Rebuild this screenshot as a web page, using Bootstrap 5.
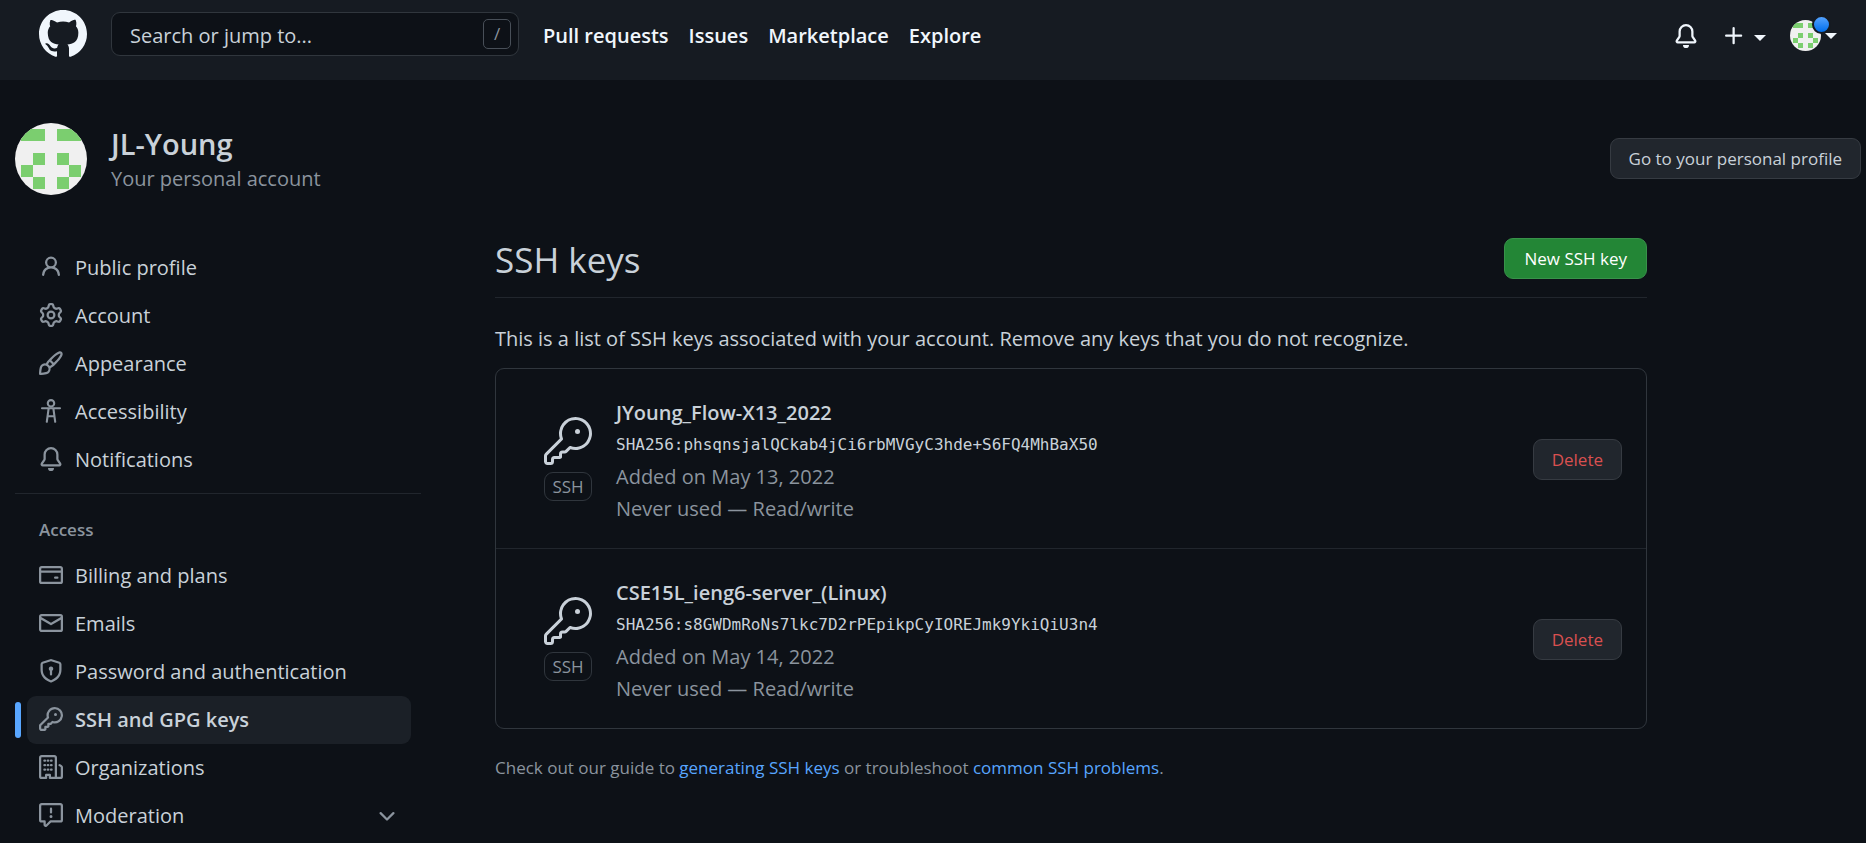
<!DOCTYPE html>
<html lang="en">
<head>
<meta charset="utf-8">
<meta name="viewport" content="width=device-width, initial-scale=1">
<title>SSH and GPG keys</title>
<link rel="stylesheet" href="https://cdn.jsdelivr.net/npm/bootstrap@5.3.0/dist/css/bootstrap.min.css">
<style>
  :root {
    --canvas: #0d1117;
    --header: #161b22;
    --line: #30363d;
    --line-muted: #21262d;
    --fg: #c9d1d9;
    --fg-muted: #8b949e;
    --accent: #58a6ff;
  }
  body {
    background: var(--canvas);
    color: var(--fg);
    font-family: "Segoe UI", "Open Sans", "Noto Sans", sans-serif;
    font-size: 20px;
    line-height: 32px;
  }
  a { color: inherit; text-decoration: none; }
  svg { fill: currentColor; flex-shrink: 0; }
  .text-dim { color: var(--fg-muted); }

  .site-header { background: var(--header); color: #f0f6fc; padding: 10px 29px 22px 39px; }
  .search-box {
    width: 408px; height: 44px; margin-left: 24px;
    background: var(--canvas); border: 1px solid var(--line); border-radius: 9px;
    padding: 0 7px 0 18px;
  }
  .search-box input { color: var(--fg); background: transparent; border: 0; outline: 0; min-width: 0; padding: 3px 0 0; }
  .search-box input::placeholder { color: var(--fg); opacity: 1; }
  .slash-key {
    width: 28px; height: 30px; border: 1px solid #484f58; border-radius: 5px;
    background: transparent; color: var(--fg-muted); font-size: 17px; line-height: 26px; padding: 0;
  }
  .site-links { gap: 20px; margin-left: 24px; padding-top: 3px; font-weight: 600; }
  .site-tools { padding-top: 3px; }
  .icon-btn { background: none; border: 0; padding: 0; color: inherit; display: flex; align-items: center; }
  .caret { border: 6px solid transparent; border-top-color: currentColor; border-bottom: 0; }
  .identicon { border-radius: 50%; background: #f0f0f0; fill: #7bce6f; display: block; }
  .status-dot {
    width: 19px; height: 19px; right: -10px; top: -5px; border: 2px solid var(--header);
    border-radius: 50%; background: linear-gradient(#54a3ff, #006eed);
  }

  .profile { padding: 42px 5px 43px 15px; }
  .profile-name { padding-top: 3px; }
  .profile h2 { font-size: 29px; line-height: 38px; font-weight: 600; }
  .btn-gh {
    --bs-btn-bg: #21262d; --bs-btn-color: var(--fg); --bs-btn-border-color: #363b42;
    --bs-btn-hover-bg: #30363d; --bs-btn-hover-color: var(--fg); --bs-btn-hover-border-color: #8b949e;
    --bs-btn-font-size: 17px; --bs-btn-line-height: 29px; --bs-btn-border-radius: 9px;
    --bs-btn-padding-x: 18px; --bs-btn-padding-y: 5px; white-space: nowrap;
  }
  .btn-new { --bs-btn-bg: #238636; --bs-btn-color: #fff; --bs-btn-border-color: #38924a; --bs-btn-hover-bg: #2ea043; --bs-btn-hover-color: #fff; --bs-btn-padding-x: 19px; }
  .btn-del { --bs-btn-color: #da5050; --bs-btn-hover-bg: #da3633; --bs-btn-hover-color: #fff; }

  .settings { padding: 0 15px; gap: 74px; }
  .side-nav { flex: 0 0 406px; padding-top: 6px; }
  .side-nav ul { padding: 0 10px 0 12px; }
  .side-nav li { position: relative; }
  .side-nav li a { display: flex; align-items: center; gap: 12px; height: 48px; padding: 0 16px 0 12px; border-radius: 9px; }
  .side-nav li svg { color: var(--fg-muted); margin-bottom: 2px; }
  .side-nav .current a { background: #1b2027; font-weight: 600; }
  .side-nav .current::before {
    content: ""; position: absolute; left: -12px; top: 6px; width: 6px; height: 36px;
    border-radius: 6px; background: var(--accent);
  }
  .side-nav hr { margin: 9px 0 20px; border-color: var(--line-muted); opacity: 1; }
  .side-nav h3 { margin: 0 0 7px; padding-left: 24px; font-size: 17px; line-height: 31px; font-weight: 600; color: var(--fg-muted); }

  .keys { max-width: 1152px; min-width: 0; }
  .keys-head { border-bottom: 1px solid var(--line-muted); padding-bottom: 15px; margin-bottom: 25px; }
  .keys-head h1 { font-size: 35px; line-height: 44px; font-weight: 400; }
  .key-list { border: 1px solid var(--line); border-radius: 9px; margin: 13px 0 24px; }
  .key-row { padding: 24px 24px 23px 48px; gap: 24px; }
  .key-row + .key-row { border-top: 1px solid var(--line-muted); }
  .key-kind { width: 48px; }
  .key-text { padding-top: 4px; }
  .key-tag { border: 1px solid var(--line); border-radius: 9px; margin-top: 7px; font-size: 17px; line-height: 27px; text-align: center; color: var(--fg-muted); }
  .key-row code { display: block; color: var(--fg); font: 16px/32px "DejaVu Sans Mono", monospace; overflow-wrap: anywhere; }
  .key-row strong { font-weight: 600; display: block; }
  .guide { font-size: 17px; line-height: 30px; margin: 0; color: var(--fg-muted); }
  .guide a { color: var(--accent); }
</style>
</head>
<body>

<svg class="d-none" aria-hidden="true">
  <symbol id="i-bell" viewBox="0 0 16 16"><path d="M8 16a2 2 0 001.985-1.75c.017-.137-.097-.25-.235-.25h-3.5c-.138 0-.252.113-.235.25A2 2 0 008 16z"/><path fill-rule="evenodd" d="M8 1.5A3.5 3.5 0 004.5 5v2.947c0 .346-.102.683-.294.97l-1.703 2.556a.018.018 0 00-.003.01l.001.006c0 .002.002.004.004.006a.017.017 0 00.006.004l.007.001h10.964l.007-.001a.016.016 0 00.006-.004.016.016 0 00.004-.006l.001-.007a.017.017 0 00-.003-.01l-1.703-2.554a1.75 1.75 0 01-.294-.97V5A3.5 3.5 0 008 1.5zM3 5a5 5 0 0110 0v2.947c0 .05.015.098.042.139l1.703 2.555A1.518 1.518 0 0113.482 13H2.518a1.518 1.518 0 01-1.263-2.36l1.703-2.554A.25.25 0 003 7.947V5z"/></symbol>
  <symbol id="i-identicon" viewBox="0 0 12 12"><path shape-rendering="crispEdges" d="M1 1h4v2H1zM7 1h4v2H7zM3 5h2v2H3zM7 5h2v2H7zM1 7h2v2H1zM9 7h2v2H9zM3 9h2v2H3zM7 9h2v2H7z"/></symbol>
  <symbol id="i-key-lg" viewBox="0 0 24 24"><path d="M16.75 8.5a1.25 1.25 0 100-2.5 1.25 1.25 0 000 2.5z"/><path fill-rule="evenodd" d="M15.75 0a8.25 8.25 0 00-7.851 10.79L.513 18.178A1.75 1.75 0 000 19.414v2.836C0 23.217.784 24 1.75 24h1.5A1.75 1.75 0 005 22.25v-1a.25.25 0 01.25-.25h2.735a.75.75 0 00.545-.22l.214-.213A.875.875 0 009 19.948V18.5a.25.25 0 01.25-.25h1.086c.464 0 .91-.184 1.237-.513l1.636-1.636A8.25 8.25 0 1015.75 0zM9 8.25a6.75 6.75 0 114.288 6.287.75.75 0 00-.804.168l-1.971 1.972a.25.25 0 01-.177.073H9.25A1.75 1.75 0 007.5 18.5v1H5.25a1.75 1.75 0 00-1.75 1.75v1a.25.25 0 01-.25.25h-1.5a.25.25 0 01-.25-.25v-2.836a.25.25 0 01.073-.177l7.722-7.721a.75.75 0 00.168-.804A6.73 6.73 0 019 8.25z"/></symbol>
</svg>

<header class="site-header d-flex align-items-center">
  <a href="#" aria-label="Homepage"><svg class="d-block" width="48" height="48" viewBox="0 0 16 16"><path d="M8 0C3.58 0 0 3.58 0 8c0 3.54 2.29 6.53 5.47 7.59.4.07.55-.17.55-.38 0-.19-.01-.82-.01-1.49-2.01.37-2.53-.49-2.69-.94-.09-.23-.48-.94-.82-1.13-.28-.15-.68-.52-.01-.53.63-.01 1.08.58 1.23.82.72 1.21 1.87.87 2.33.66.07-.52.28-.87.51-1.07-1.78-.2-3.64-.89-3.64-3.95 0-.87.31-1.59.82-2.15-.08-.2-.36-1.02.08-2.12 0 0 .67-.21 2.2.82.64-.18 1.32-.27 2-.27.68 0 1.36.09 2 .27 1.53-1.04 2.2-.82 2.2-.82.44 1.1.16 1.92.08 2.12.51.56.82 1.27.82 2.15 0 3.07-1.87 3.75-3.65 3.95.29.25.54.73.54 1.48 0 1.07-.01 1.93-.01 2.2 0 .21.15.46.55.38A8.013 8.013 0 0016 8c0-4.42-3.58-8-8-8z"/></svg></a>
  <form class="search-box d-flex align-items-center" role="search">
    <input class="flex-grow-1" type="text" placeholder="Search or jump to..." aria-label="Search or jump to">
    <button class="slash-key" type="button">/</button>
  </form>
  <nav class="site-links d-flex">
    <a href="#">Pull requests</a><a href="#">Issues</a><a href="#">Marketplace</a><a href="#">Explore</a>
  </nav>
  <div class="site-tools d-flex align-items-center ms-auto">
    <button class="icon-btn me-4" type="button" aria-label="Notifications"><svg width="24" height="24"><use href="#i-bell"/></svg></button>
    <button class="icon-btn me-4 gap-2" type="button" aria-label="Create new">
      <svg width="24" height="24" viewBox="0 0 16 16"><path d="M7.75 2a.75.75 0 01.75.75V7h4.25a.75.75 0 110 1.5H8.5v4.25a.75.75 0 11-1.5 0V8.5H2.75a.75.75 0 010-1.5H7V2.75A.75.75 0 017.75 2z"/></svg>
      <span class="caret mt-1"></span>
    </button>
    <button class="icon-btn gap-1" type="button" aria-label="Account menu">
      <span class="position-relative"><svg class="identicon" width="31" height="31"><use href="#i-identicon"/></svg><span class="status-dot position-absolute"></span></span>
      <span class="caret"></span>
    </button>
  </div>
</header>

<section class="profile d-flex align-items-center">
  <svg class="identicon" width="72" height="72"><use href="#i-identicon"/></svg>
  <div class="profile-name ms-4">
    <h2 class="mb-0"><a href="#">JL-Young</a></h2>
    <div class="text-dim">Your personal account</div>
  </div>
  <button class="btn btn-gh ms-auto" type="button">Go to your personal profile</button>
</section>

<div class="settings d-flex">
  <nav class="side-nav" aria-label="Settings">
    <ul class="list-unstyled mb-0">
      <li><a href="#"><svg width="24" height="24" viewBox="0 0 16 16"><path fill-rule="evenodd" d="M10.5 5a2.5 2.5 0 11-5 0 2.5 2.5 0 015 0zm.061 3.073a4 4 0 10-5.123 0 6.004 6.004 0 00-3.431 5.142.75.75 0 001.498.07 4.5 4.5 0 018.99 0 .75.75 0 101.498-.07 6.005 6.005 0 00-3.432-5.142z"/></svg>Public profile</a></li>
      <li><a href="#"><svg width="24" height="24" viewBox="0 0 16 16"><path fill-rule="evenodd" d="M7.429 1.525a6.593 6.593 0 011.142 0c.036.003.108.036.137.146l.289 1.105c.147.56.55.967.997 1.189.174.086.341.183.501.29.417.278.97.423 1.53.27l1.102-.303c.11-.03.175.016.195.046.219.31.41.641.573.989.014.031.022.11-.059.19l-.815.806c-.411.406-.562.957-.53 1.456a4.588 4.588 0 010 .582c-.032.499.119 1.05.53 1.456l.815.806c.08.08.073.159.059.19a6.494 6.494 0 01-.573.99c-.02.029-.086.074-.195.045l-1.103-.303c-.559-.153-1.112-.008-1.529.27-.16.107-.327.204-.5.29-.449.222-.851.628-.998 1.189l-.289 1.105c-.029.11-.101.143-.137.146a6.613 6.613 0 01-1.142 0c-.036-.003-.108-.037-.137-.146l-.289-1.105c-.147-.56-.55-.967-.997-1.189a4.502 4.502 0 01-.501-.29c-.417-.278-.97-.423-1.53-.27l-1.102.303c-.11.03-.175-.016-.195-.046a6.492 6.492 0 01-.573-.989c-.014-.031-.022-.11.059-.19l.815-.806c.411-.406.562-.957.53-1.456a4.587 4.587 0 010-.582c.032-.499-.119-1.05-.53-1.456l-.815-.806c-.08-.08-.073-.159-.059-.19a6.44 6.44 0 01.573-.99c.02-.029.086-.075.195-.045l1.103.303c.559.153 1.112.008 1.529-.27.16-.107.327-.204.5-.29.449-.222.851-.628.998-1.189l.289-1.105c.029-.11.101-.143.137-.146zM8 0c-.236 0-.47.01-.701.03-.743.065-1.29.615-1.458 1.261l-.29 1.106c-.017.066-.078.158-.211.224a5.994 5.994 0 00-.668.386c-.123.082-.233.09-.3.071L3.27 2.776c-.644-.177-1.392.02-1.82.63a7.977 7.977 0 00-.704 1.217c-.315.675-.111 1.422.363 1.891l.815.806c.05.048.098.147.088.294a6.084 6.084 0 000 .772c.01.147-.038.246-.088.294l-.815.806c-.474.469-.678 1.216-.363 1.891.2.428.436.835.704 1.218.428.609 1.176.806 1.82.63l1.103-.303c.066-.019.176-.011.299.071.213.143.436.272.668.386.133.066.194.158.212.224l.289 1.106c.169.646.715 1.196 1.458 1.26a8.094 8.094 0 001.402 0c.743-.064 1.29-.614 1.458-1.26l.29-1.106c.017-.066.078-.158.211-.224a5.98 5.98 0 00.668-.386c.123-.082.233-.09.3-.071l1.102.302c.644.177 1.392-.02 1.82-.63.268-.382.505-.789.704-1.217.315-.675.111-1.422-.364-1.891l-.814-.806c-.05-.048-.098-.147-.088-.294a6.1 6.1 0 000-.772c-.01-.147.039-.246.088-.294l.814-.806c.475-.469.679-1.216.364-1.891a7.992 7.992 0 00-.704-1.218c-.428-.609-1.176-.806-1.82-.63l-1.103.303c-.066.019-.176.011-.299-.071a5.991 5.991 0 00-.668-.386c-.133-.066-.194-.158-.212-.224L10.16 1.29C9.99.645 9.444.095 8.701.031A8.094 8.094 0 008 0zm1.5 8a1.5 1.5 0 11-3 0 1.5 1.5 0 013 0zM11 8a3 3 0 11-6 0 3 3 0 016 0z"/></svg>Account</a></li>
      <li><a href="#"><svg width="24" height="24" viewBox="0 0 16 16"><path fill-rule="evenodd" d="M11.134 1.535C9.722 2.562 8.16 4.057 6.889 5.312 5.8 6.387 5.041 7.401 4.575 8.294a3.745 3.745 0 00-3.227 1.054c-.43.431-.69 1.066-.86 1.657a11.982 11.982 0 00-.358 1.914A21.263 21.263 0 000 15.203v.054l.75-.007-.007.75h.054a14.404 14.404 0 00.654-.012 21.243 21.243 0 001.63-.118c.62-.07 1.3-.18 1.914-.357.592-.17 1.226-.43 1.657-.861a3.745 3.745 0 001.055-3.217c.908-.461 1.942-1.216 3.04-2.3 1.279-1.262 2.764-2.825 3.775-4.249.501-.706.923-1.428 1.125-2.096.2-.659.235-1.469-.368-2.07-.606-.607-1.42-.55-2.069-.34-.66.213-1.376.646-2.076 1.155zm-3.95 8.48a3.76 3.76 0 00-1.19-1.192 9.758 9.758 0 011.161-1.607l1.658 1.658a9.853 9.853 0 01-1.63 1.142zM.742 16l.007-.75-.75.008A.75.75 0 00.743 16zM12.016 2.749c-1.224.89-2.605 2.189-3.822 3.384l1.718 1.718c1.21-1.205 2.51-2.597 3.387-3.833.47-.662.78-1.227.912-1.662.134-.444.032-.551.009-.575h-.001V1.78c-.014-.014-.112-.113-.548.027-.432.14-.995.462-1.655.942zM1.62 13.089a19.56 19.56 0 00-.104 1.395 19.55 19.55 0 001.396-.104 10.528 10.528 0 001.668-.309c.526-.151.856-.325 1.011-.48a2.25 2.25 0 00-3.182-3.182c-.155.155-.329.485-.48 1.01a10.515 10.515 0 00-.309 1.67z"/></svg>Appearance</a></li>
      <li><a href="#"><svg width="24" height="24" viewBox="0 0 16 16"><g fill="none" stroke="currentColor" stroke-width="1.4" stroke-linecap="round" stroke-linejoin="round"><circle cx="8" cy="2.9" r="2.15"/><path d="M2 6.2h12M6.4 6.4L5.2 15.2M9.6 6.4l1.2 8.8M5.8 11.5h4.4"/></g></svg>Accessibility</a></li>
      <li><a href="#"><svg width="24" height="24"><use href="#i-bell"/></svg>Notifications</a></li>
    </ul>
    <hr>
    <h3>Access</h3>
    <ul class="list-unstyled mb-0">
      <li><a href="#"><svg width="24" height="24" viewBox="0 0 16 16"><path d="M10.75 9a.75.75 0 000 1.5h1.5a.75.75 0 000-1.5h-1.5z"/><path fill-rule="evenodd" d="M0 3.75C0 2.784.784 2 1.75 2h12.5c.966 0 1.75.784 1.75 1.75v8.5A1.75 1.75 0 0114.25 14H1.75A1.75 1.75 0 010 12.25v-8.5zm14.5 0V5h-13V3.75a.25.25 0 01.25-.25h12.5a.25.25 0 01.25.25zm0 2.75h-13v5.75c0 .138.112.25.25.25h12.5a.25.25 0 00.25-.25V6.5z"/></svg>Billing and plans</a></li>
      <li><a href="#"><svg width="24" height="24" viewBox="0 0 16 16"><path fill-rule="evenodd" d="M1.75 2A1.75 1.75 0 000 3.75v.736a.75.75 0 000 .027v7.737C0 13.216.784 14 1.75 14h12.5A1.75 1.75 0 0016 12.25v-8.5A1.75 1.75 0 0014.25 2H1.75zM14.5 4.07v-.32a.25.25 0 00-.25-.25H1.75a.25.25 0 00-.25.25v.32L8 7.88l6.5-3.81zm-13 1.74v6.441c0 .138.112.25.25.25h12.5a.25.25 0 00.25-.25V5.809L8.38 9.397a.75.75 0 01-.76 0L1.5 5.809z"/></svg>Emails</a></li>
      <li><a href="#"><svg width="24" height="24" viewBox="0 0 16 16"><path fill-rule="evenodd" d="M8.533.133a1.75 1.75 0 00-1.066 0l-5.25 1.68A1.75 1.75 0 001 3.48V7c0 1.566.32 3.182 1.303 4.682.983 1.498 2.585 2.813 5.032 3.855a1.7 1.7 0 001.33 0c2.447-1.042 4.049-2.357 5.032-3.855C14.68 10.182 15 8.566 15 7V3.48a1.75 1.75 0 00-1.217-1.667L8.533.133zm-.61 1.429a.25.25 0 01.153 0l5.25 1.68a.25.25 0 01.174.238V7c0 1.358-.275 2.666-1.057 3.86-.784 1.194-2.121 2.34-4.366 3.297a.2.2 0 01-.154 0c-2.245-.956-3.582-2.104-4.366-3.298C2.775 9.666 2.5 8.36 2.5 7V3.48a.25.25 0 01.174-.237l5.25-1.68zM9.5 6.5a1.5 1.5 0 01-.75 1.3v2.45a.75.75 0 01-1.5 0V7.8A1.5 1.5 0 119.5 6.5z"/></svg>Password and authentication</a></li>
      <li class="current"><a href="#" aria-current="page"><svg width="24" height="24" viewBox="0 0 16 16"><path fill-rule="evenodd" d="M6.5 5.5a4 4 0 112.731 3.795.75.75 0 00-.768.18L7.44 10.5H6.25a.75.75 0 00-.75.75v1.19l-.06.06H4.25a.75.75 0 00-.75.75v1.19l-.06.06H1.75a.25.25 0 01-.25-.25v-1.69l5.024-5.023a.75.75 0 00.181-.768A3.995 3.995 0 016.5 5.5zm4-5.5a5.5 5.5 0 00-5.348 6.788L.22 11.72a.75.75 0 00-.22.53v2C0 15.216.784 16 1.75 16h2a.75.75 0 00.53-.22l.5-.5a.75.75 0 00.22-.53V14h.75a.75.75 0 00.53-.22l.5-.5a.75.75 0 00.22-.53V12h.75a.75.75 0 00.53-.22l.932-.932A5.5 5.5 0 1010.5 0zm.5 6a1 1 0 100-2 1 1 0 000 2z"/></svg>SSH and GPG keys</a></li>
      <li><a href="#"><svg width="24" height="24" viewBox="0 0 16 16"><path fill-rule="evenodd" d="M1.5 14.25c0 .138.112.25.25.25H4v-1.25a.75.75 0 01.75-.75h2.5a.75.75 0 01.75.75v1.25h2.25a.25.25 0 00.25-.25V1.75a.25.25 0 00-.25-.25h-8.5a.25.25 0 00-.25.25v12.5zM1.75 16A1.75 1.75 0 010 14.25V1.75C0 .784.784 0 1.75 0h8.5C11.216 0 12 .784 12 1.75v12.5c0 .085-.006.168-.018.25h2.268a.25.25 0 00.25-.25V8.285a.25.25 0 00-.111-.208l-1.055-.703a.75.75 0 11.832-1.248l1.055.703c.487.325.779.871.779 1.456v5.965A1.75 1.75 0 0114.25 16h-3.5a.75.75 0 01-.197-.026c-.099.017-.2.026-.303.026h-3a.75.75 0 01-.75-.75V14h-1v1.25a.75.75 0 01-.75.75h-3z"/><path fill="none" stroke="currentColor" stroke-width="1.5" stroke-linecap="round" d="M3.6 3.75h.4M3.6 6.75h.4M3.6 9.75h.4M5.8 3.75h.4M5.8 6.75h.4M5.8 9.75h.4M8 3.75h.4M8 6.75h.4M8 9.75h.4"/></svg>Organizations</a></li>
      <li><a href="#"><svg width="24" height="24" viewBox="0 0 16 16"><path fill-rule="evenodd" d="M0 1.75C0 .784.784 0 1.75 0h12.5C15.216 0 16 .784 16 1.75v9.5A1.75 1.75 0 0114.25 13H8.06l-2.573 2.573A1.457 1.457 0 013 14.543V13H1.75A1.75 1.75 0 010 11.25v-9.5zm1.75-.25a.25.25 0 00-.25.25v9.5c0 .138.112.25.25.25h2a.75.75 0 01.75.75v2.19l2.72-2.72a.75.75 0 01.53-.22h6.5a.25.25 0 00.25-.25v-9.5a.25.25 0 00-.25-.25H1.75zM9 9a1 1 0 11-2 0 1 1 0 012 0zM8.75 3.75a.75.75 0 00-1.5 0v2.5a.75.75 0 001.5 0v-2.5z"/></svg>Moderation<svg class="ms-auto" width="16" height="24" viewBox="2.7 0 10.6 16"><path d="M12.78 6.22a.75.75 0 010 1.06l-4.25 4.25a.75.75 0 01-1.06 0L3.22 7.28a.75.75 0 011.06-1.06L8 9.94l3.72-3.72a.75.75 0 011.06 0z"/></svg></a></li>
    </ul>
  </nav>

  <main class="keys flex-grow-1">
    <div class="keys-head d-flex align-items-start justify-content-between">
      <h1 class="mb-0">SSH keys</h1>
      <button class="btn btn-gh btn-new" type="button">New SSH key</button>
    </div>
    <p class="mb-0">This is a list of SSH keys associated with your account. Remove any keys that you do not recognize.</p>
    <div class="key-list">
      <div class="key-row d-flex align-items-center">
        <div class="key-kind"><svg class="d-block" width="48" height="48"><use href="#i-key-lg"/></svg><div class="key-tag">SSH</div></div>
        <div class="key-text flex-grow-1">
          <strong>JYoung_Flow-X13_2022</strong>
          <code>SHA256:phsqnsjalQCkab4jCi6rbMVGyC3hde+S6FQ4MhBaX50</code>
          <div class="text-dim">Added on May 13, 2022</div>
          <div class="text-dim">Never used — Read/write</div>
        </div>
        <button class="btn btn-gh btn-del" type="button">Delete</button>
      </div>
      <div class="key-row d-flex align-items-center">
        <div class="key-kind"><svg class="d-block" width="48" height="48"><use href="#i-key-lg"/></svg><div class="key-tag">SSH</div></div>
        <div class="key-text flex-grow-1">
          <strong>CSE15L_ieng6-server_(Linux)</strong>
          <code>SHA256:s8GWDmRoNs7lkc7D2rPEpikpCyIOREJmk9YkiQiU3n4</code>
          <div class="text-dim">Added on May 14, 2022</div>
          <div class="text-dim">Never used — Read/write</div>
        </div>
        <button class="btn btn-gh btn-del" type="button">Delete</button>
      </div>
    </div>
    <p class="guide">Check out our guide to <a href="#">generating SSH keys</a> or troubleshoot <a href="#">common SSH problems</a>.</p>
  </main>
</div>

<script src="https://cdn.jsdelivr.net/npm/bootstrap@5.3.0/dist/js/bootstrap.bundle.min.js"></script>
</body>
</html>
